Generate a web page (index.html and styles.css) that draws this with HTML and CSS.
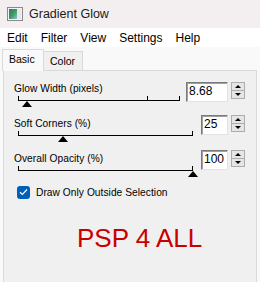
FILE: index.html
```html
<!DOCTYPE html>
<html>
<head>
<meta charset="utf-8">
<link rel="stylesheet" href="styles.css">
</head>
<body>
<div class="window">
  <div class="titlebar">
    <svg class="app-icon" width="16" height="14" viewBox="0 0 16 14">
      <defs>
        <linearGradient id="g" x1="0" y1="0" x2="1" y2="1">
          <stop offset="0" stop-color="#2f6f8f"/>
          <stop offset="0.5" stop-color="#3f9a5a"/>
          <stop offset="1" stop-color="#8fc0d8"/>
        </linearGradient>
      </defs>
      <rect x="0.5" y="0.5" width="15" height="13" fill="#f4f4f4" stroke="#8a8a8a"/>
      <rect x="2" y="2" width="8" height="10" fill="url(#g)"/>
      <rect x="10" y="2" width="4" height="10" fill="#e4e8ea"/>
    </svg>
    <span class="title">Gradient Glow</span>
  </div>
  <div class="menubar">
    <span class="menu-item">Edit</span>
    <span class="menu-item">Filter</span>
    <span class="menu-item">View</span>
    <span class="menu-item">Settings</span>
    <span class="menu-item">Help</span>
  </div>
  <div class="tabs">
    <div class="tab tab-active">Basic</div>
    <div class="tab">Color</div>
  </div>
  <div class="panel">
    <div class="row row-first">
      <div class="slider">
        <div class="label">Glow Width (pixels)</div>
        <div class="track">
          <span class="tick tick-start"></span>
          <span class="tick" style="left:129px"></span>
          <span class="tick tick-end"></span>
          <span class="thumb" style="left:4px"></span>
        </div>
      </div>
      <div class="num num-wide">8.68</div>
      <div class="spin"><span class="spin-up"></span><span class="spin-down"></span></div>
    </div>
    <div class="row">
      <div class="slider">
        <div class="label">Soft Corners (%)</div>
        <div class="track">
          <span class="tick tick-start"></span>
          <span class="tick tick-end"></span>
          <span class="thumb" style="left:40px"></span>
        </div>
      </div>
      <div class="num">25</div>
      <div class="spin"><span class="spin-up"></span><span class="spin-down"></span></div>
    </div>
    <div class="row">
      <div class="slider">
        <div class="label">Overall Opacity (%)</div>
        <div class="track">
          <span class="tick tick-start"></span>
          <span class="tick tick-end"></span>
          <span class="thumb" style="left:170px"></span>
        </div>
      </div>
      <div class="num">100</div>
      <div class="spin"><span class="spin-up"></span><span class="spin-down"></span></div>
    </div>
    <div class="check">
      <span class="box">
        <svg width="9" height="8" viewBox="0 0 9 8"><path d="M1 4.2 L3.4 6.5 L8 1.5" fill="none" stroke="#fff" stroke-width="1.2"/></svg>
      </span>
      <span>Draw Only Outside Selection</span>
    </div>
    <div class="brand">PSP 4 ALL</div>
  </div>
</div>
</body>
</html>
```

FILE: styles.css
```css
* { box-sizing: border-box; }
html, body { margin: 0; padding: 0; }
body {
  width: 260px;
  height: 282px;
  overflow: hidden;
  background: #f9f9f9;
  font-family: "Liberation Sans", Arial, sans-serif;
  color: #000;
}
.window { display: flex; flex-direction: column; height: 282px; }
.titlebar {
  height: 28px;
  background: #f3eff0;
  display: flex;
  align-items: center;
  padding-left: 7px;
  gap: 6px;
}
.app-icon { display: block; margin-top: -1px; }
.title { font-size: 12.5px; color: #1a1a1a; }
.menubar {
  height: 19px;
  background: #ffffff;
  display: flex;
  align-items: center;
  padding-left: 7px;
  font-size: 12px;
}
.menu-item { margin-right: 13px; }
.tabs {
  display: flex;
  align-items: flex-end;
  margin-top: 2px;
  padding-left: 2px;
  height: 21px;
  font-size: 10.5px;
}
.tab {
  height: 19px;
  border: 1px solid #d9d9d9;
  border-bottom: none;
  background: #f0f0f0;
  padding: 3px 6px 0 6px;
  line-height: 13px;
}
.tab-active {
  height: 22px;
  width: 42px;
  background: #f9f9f9;
  padding: 3px 5px 0 6px;
  position: relative;
  z-index: 1;
  margin-bottom: -1px;
  border-color: #d9d9d9;
}
.tab-active + .tab { border-left: none; width: 39px; }
.panel {
  flex: 1;
  margin: 0 3px 0 3px;
  border: 1px solid #d9d9d9;
  border-bottom: none;
  background: #f0f0f0;
  padding: 11px 11px 0 9px;
  font-size: 10.2px;
  letter-spacing: 0.05px;
}
.row {
  display: flex;
  align-items: flex-start;
  height: 35px;
}
.row-first { height: 33px; }
.slider { flex: 1; margin-right: 8px; }
.row-first .slider { margin-right: 6px; }
.label { line-height: 13px; height: 13px; padding-left: 1px; }
.row + .row .label { margin-top: 2px; }
.track {
  position: relative;
  height: 13px;
  margin-left: 5px;
}
.track::before {
  content: "";
  position: absolute;
  left: 0; right: 0;
  top: 5px;
  height: 1px;
  background: #000;
}
.tick {
  position: absolute;
  top: 1px;
  width: 1px;
  height: 5px;
  background: #000;
}
.tick-start { left: 0; }
.tick-end { right: 0; }
.thumb {
  position: absolute;
  top: 6px;
  width: 0; height: 0;
  border-left: 5px solid transparent;
  border-right: 5px solid transparent;
  border-bottom: 6px solid #000;
}
.num {
  width: 27px;
  height: 20px;
  background: #fff;
  border-top: 1px solid #7a7a7a;
  border-left: 1px solid #7a7a7a;
  border-right: 1px solid #e3e3e3;
  border-bottom: 1px solid #e3e3e3;
  box-shadow: inset 1px 1px 0 #a0a0a0;
  font-size: 12px;
  letter-spacing: 0;
  line-height: 17px;
  padding-left: 2px;
}
.num-wide { width: 42px; }
.spin {
  width: 14px;
  height: 17px;
  margin-left: 3px;
  border: 1px solid #adadad;
  background: #e5e5e5;
  display: flex;
  flex-direction: column;
}
.spin-up, .spin-down {
  flex: 1;
  display: flex;
  align-items: center;
  justify-content: center;
}
.spin-up { border-bottom: 1px solid #adadad; }
.spin-up::after {
  content: "";
  border-left: 3px solid transparent;
  border-right: 3px solid transparent;
  border-bottom: 3px solid #000;
}
.spin-down::after {
  content: "";
  border-left: 3px solid transparent;
  border-right: 3px solid transparent;
  border-top: 3px solid #000;
}
.check {
  display: flex;
  align-items: center;
  gap: 6px;
  margin-top: 0;
  padding-left: 4px;
  height: 14px;
}
.box {
  width: 13px;
  height: 13px;
  border-radius: 3px;
  background: #005fb8;
  display: flex;
  align-items: center;
  justify-content: center;
}
.box svg { display: block; }
.brand {
  margin-top: 25px;
  padding-left: 64px;
  font-size: 26px;
  letter-spacing: 0;
  line-height: 29px;
  color: #c80000;
}
```
